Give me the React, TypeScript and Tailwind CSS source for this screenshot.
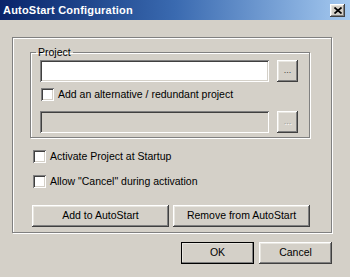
import React from 'react';

const raised =
  'bg-[#d4d0c8] shadow-[inset_-1px_-1px_#404040,inset_1px_1px_#ffffff,inset_-2px_-2px_#808080,inset_2px_2px_#e8e6e0]';
const sunken =
  'shadow-[inset_1px_1px_#808080,inset_-1px_-1px_#ffffff,inset_2px_2px_#404040,inset_-2px_-2px_#d4d0c8]';

function Checkbox({ label }: { label: string }) {
  return (
    <label className="flex items-center gap-[4px] leading-[13px]">
      <span className={`w-[13px] h-[13px] bg-white shrink-0 ${sunken}`} />
      <span>{label}</span>
    </label>
  );
}

function BrowseButton({ disabled }: { disabled?: boolean }) {
  return (
    <button
      className={`w-[21px] h-[22px] flex items-center justify-center text-[9px] leading-none pb-[2px] ${raised} ${
        disabled ? 'text-[#a0a0a0] [text-shadow:1px_1px_#fff]' : 'text-[#404040]'
      }`}
    >
      ...
    </button>
  );
}

export default function App() {
  return (
    <div className="w-[350px] h-[277px] bg-[#d4d0c8] overflow-hidden text-[10.5px] text-black font-['Liberation_Sans',Arial,sans-serif]">
      {/* Title bar */}
      <div className="h-[20px] flex items-center justify-between pl-[3px] pr-[5px] bg-gradient-to-r from-[#0a246a] via-[#3a6ab0] to-[#a6caf0]">
        <span className="font-bold text-[11px] text-white tracking-[0.2px]">AutoStart Configuration</span>
        <button className={`w-[15px] h-[13px] flex items-center justify-center ${raised}`}>
          <svg width="8" height="7" viewBox="0 0 8 7">
            <path d="M0.5 0.5 L7.5 6.5 M7.5 0.5 L0.5 6.5" stroke="#000" strokeWidth="1.7" />
          </svg>
        </button>
      </div>

      {/* Outer panel */}
      <div className="ml-[12px] mt-[17px] w-[320px] h-[196px] border border-[#808080] shadow-[1px_1px_0_#ffffff,inset_1px_1px_0_#ffffff] pl-[17px] pt-[8px]">
        <fieldset className="w-[280px] border border-[#808080] shadow-[1px_1px_0_#ffffff,inset_1px_1px_0_#ffffff] pl-[9px] pb-[4px] pt-[2px]">
          <legend className="-ml-[4px] px-[2px] leading-[12px]">Project</legend>
          <div className="flex gap-[8px]">
            <div className={`w-[229px] h-[22px] bg-white ${sunken}`} />
            <BrowseButton />
          </div>
          <div className="mt-[6px] ml-[1px]">
            <Checkbox label="Add an alternative / redundant project" />
          </div>
          <div className="flex gap-[8px] mt-[10px]">
            <div className={`w-[229px] h-[22px] bg-[#d4d0c8] ${sunken}`} />
            <BrowseButton disabled />
          </div>
        </fieldset>

        <div className="mt-[12px] ml-[3px]">
          <Checkbox label="Activate Project at Startup" />
        </div>
        <div className="mt-[12px] ml-[3px]">
          <Checkbox label='Allow "Cancel" during activation' />
        </div>

        <div className="mt-[17px] ml-[2px] flex gap-[4px]">
          <button className={`w-[137px] h-[22px] ${raised}`}>Add to AutoStart</button>
          <button className={`w-[137px] h-[22px] ${raised}`}>Remove from AutoStart</button>
        </div>
      </div>

      {/* Dialog buttons */}
      <div className="mt-[9px] pr-[18px] flex justify-end gap-[5px]">
        <button className={`w-[73px] h-[22px] outline outline-1 outline-black -outline-offset-1 ${raised}`}>OK</button>
        <button className={`w-[73px] h-[22px] ${raised}`}>Cancel</button>
      </div>
    </div>
  );
}
